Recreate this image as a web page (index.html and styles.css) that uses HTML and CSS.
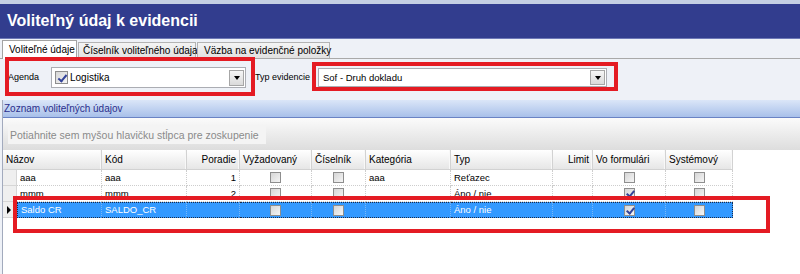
FILE: index.html
```html
<!DOCTYPE html>
<html lang="sk">
<head>
  <meta charset="UTF-8" />
  <title>Voliteľný údaj k evidencii</title>
  <link rel="stylesheet" href="styles.css">
</head>
<body>
  <div class="topline"></div>
  <header class="titlebar">
    <h1>Voliteľný údaj k evidencii</h1>
  </header>

  <nav class="tabs">
    <div class="tab active">Voliteľné údaje</div>
    <div class="tab tab-second">Číselník voliteľného údaja</div>
    <div class="tab tab-third">Väzba na evidenčné položky</div>
  </nav>

  <div class="filters">
    <label class="field-label label-agenda">Agenda</label>
    <div class="combo combo-agenda">
      <span class="check on"></span>
      <span class="combo-text">Logistika</span>
      <span class="dropdown"></span>
    </div>
    <label class="field-label label-type">Typ evidencie</label>
    <div class="combo combo-type">
      <span class="combo-text">Sof - Druh dokladu</span>
      <span class="dropdown"></span>
    </div>
  </div>

  <section class="list">
    <div class="list-caption">Zoznam voliteľných údajov</div>
    <div class="group-panel">
      <span class="group-hint">Potiahnite sem myšou hlavičku stĺpca pre zoskupenie</span>
    </div>

    <div class="grid-row grid-head">
      <div class="hcell hcell-name">Názov</div>
      <div class="hcell">Kód</div>
      <div class="hcell num">Poradie</div>
      <div class="hcell">Vyžadovaný</div>
      <div class="hcell">Číselník</div>
      <div class="hcell">Kategória</div>
      <div class="hcell">Typ</div>
      <div class="hcell num">Limit</div>
      <div class="hcell">Vo formulári</div>
      <div class="hcell">Systémový</div>
    </div>

    <div class="grid-row">
      <div class="indicator"></div>
      <div class="cell">aaa</div>
      <div class="cell">aaa</div>
      <div class="cell num">1</div>
      <div class="cell mid"><span class="check"></span></div>
      <div class="cell mid"><span class="check"></span></div>
      <div class="cell">aaa</div>
      <div class="cell">Reťazec</div>
      <div class="cell num"></div>
      <div class="cell mid"><span class="check"></span></div>
      <div class="cell mid"><span class="check"></span></div>
    </div>

    <div class="grid-row">
      <div class="indicator"></div>
      <div class="cell">mmm</div>
      <div class="cell">mmm</div>
      <div class="cell num">2</div>
      <div class="cell mid"><span class="check"></span></div>
      <div class="cell mid"><span class="check"></span></div>
      <div class="cell"></div>
      <div class="cell">Áno / nie</div>
      <div class="cell num"></div>
      <div class="cell mid"><span class="check on"></span></div>
      <div class="cell mid"><span class="check"></span></div>
    </div>

    <div class="grid-row selected">
      <div class="indicator current"></div>
      <div class="cell first">Saldo CR</div>
      <div class="cell">SALDO_CR</div>
      <div class="cell num"></div>
      <div class="cell mid"><span class="check"></span></div>
      <div class="cell mid"><span class="check"></span></div>
      <div class="cell"></div>
      <div class="cell">Áno / nie</div>
      <div class="cell num"></div>
      <div class="cell mid"><span class="check on"></span></div>
      <div class="cell mid last"><span class="check"></span></div>
    </div>
  </section>

  <!-- red highlight marks drawn over the screen -->
  <div class="mark mark-agenda"></div>
  <div class="mark mark-type"></div>
  <div class="mark mark-row"></div>
</body>
</html>
```

FILE: styles.css
```css
* {
  box-sizing: border-box;
}
body {
  margin: 0;
  width: 800px;
  height: 274px;
  overflow: hidden;
  position: relative;
  display: flex;
  flex-direction: column;
  font-family: "Liberation Sans", Arial, sans-serif;
  background: #eef1f7;
  color: #000;
}
.topline {
  height: 4px;
  background: #c5cfe3;
}
.titlebar {
  height: 35px;
  padding-left: 7px;
  display: flex;
  align-items: center;
  background: #323d8e;
  border-bottom: 1px solid #6d78b6;
}
.titlebar h1 {
  margin: 0;
  font-size: 16px;
  font-weight: bold;
  color: #fff;
}

/* tabs */
.tabs {
  height: 20px;
  display: flex;
  align-items: flex-end;
  padding-left: 2px;
  border-bottom: 1px solid #a9a9a9;
}
.tab {
  height: 16px;
  font-size: 10px;
  line-height: 15px;
  padding: 0 4px;
  margin-right: 1px;
  background: linear-gradient(#f4f4f4, #e1e1e1);
  border: 1px solid #b3b3b3;
  border-bottom: none;
  white-space: nowrap;
}
.tab.active {
  width: 75px;
  height: 19px;
  margin-bottom: -1px;
  padding-left: 6px;
  line-height: 17px;
  background: #fff;
  border-color: #a3a3a3;
}
.tab-second { width: 118px; }
.tab-third { width: 133px; padding-left: 6px; }

/* filter row */
.filters {
  height: 41px;
  display: flex;
  align-items: flex-start;
  padding: 8px 0 0 8px;
}
.field-label {
  font-size: 9px;
  line-height: 21px;
}
.label-agenda { width: 43px; }
.label-type { width: 63px; margin-left: 9px; }
.combo {
  display: flex;
  align-items: center;
  background: #fff;
  border: 1px solid #abadb3;
}
.combo-agenda {
  width: 195px;
  height: 21px;
  padding-left: 3px;
}
.combo-agenda .combo-text {
  font-size: 10px;
  margin-left: 2px;
}
.combo-agenda .check {
  width: 13px;
  height: 13px;
}
.combo-type {
  width: 289px;
  height: 19px;
  margin-top: 1px;
  padding-left: 4px;
}
.combo-type .combo-text {
  font-size: 9.5px;
}
.dropdown {
  position: relative;
  margin-left: auto;
  margin-right: 1px;
  width: 15px;
  height: 16px;
  border: 1px solid #a6a6a6;
  background: linear-gradient(#f6f6f6, #dadada);
  display: flex;
  align-items: center;
  justify-content: center;
}
.combo-type .dropdown { height: 15px; }
.dropdown::after {
  content: "";
  border-left: 3px solid transparent;
  border-right: 3px solid transparent;
  border-top: 4px solid #000;
  margin-top: 1px;
}

/* checkbox */
.check {
  position: relative;
  display: inline-block;
  width: 11px;
  height: 11px;
  border: 1px solid #8e8e8e;
  background: linear-gradient(135deg, #d6d6d6, #f5f5f5);
}
.check.on::after {
  content: "";
  position: absolute;
  left: 3px;
  top: 0;
  width: 3px;
  height: 6px;
  border-right: 2px solid #34449a;
  border-bottom: 2px solid #34449a;
  transform: rotate(40deg);
}
.combo-agenda .check.on::after {
  left: 4px;
  top: 1px;
  width: 3px;
  height: 7px;
}

/* list */
.list {
  flex: 1;
  margin-left: 2px;
  border-left: 1px solid #a2aabd;
  background: #fff;
  display: flex;
  flex-direction: column;
}
.list-caption {
  height: 18px;
  padding-left: 1px;
  font-size: 10px;
  line-height: 17px;
  color: #2b2f8c;
  background: linear-gradient(#dbe6f8, #a8c0ea);
  border-bottom: 1px solid #6a83c4;
}
.group-panel {
  height: 32px;
  padding: 7px 0 0 5px;
  background: linear-gradient(#fbfbfb, #dddddd);
}
.group-hint {
  display: inline-block;
  width: 258px;
  height: 18px;
  padding-left: 2px;
  font-size: 10.5px;
  line-height: 18px;
  color: #8a8a8a;
  background: #f4f4f4;
}

/* grid */
.grid-row {
  display: grid;
  grid-template-columns: 14px 85px 85px 53px 72px 54px 85px 102px 40px 73px 67px;
  height: 16px;
}
.grid-head {
  height: 20px;
}
.hcell {
  font-size: 10px;
  line-height: 19px;
  padding: 0 3px;
  white-space: nowrap;
  overflow: hidden;
  background: linear-gradient(#ffffff, #e6e6e6);
  border-right: 1px solid #d2d2d2;
  border-bottom: 1px solid #d2d2d2;
  box-shadow: inset -1px 0 0 #f8f8f8;
}
.hcell-name {
  grid-column: span 2;
}
.num {
  text-align: right;
}
.cell {
  font-size: 9.5px;
  line-height: 15px;
  padding: 0 3px;
  white-space: nowrap;
  overflow: hidden;
  border-right: 1px dotted #cdcdcd;
  border-bottom: 1px dotted #cdcdcd;
}
.cell.mid {
  display: flex;
  justify-content: center;
  align-items: center;
}
.indicator {
  display: flex;
  align-items: center;
  padding-left: 4px;
  background: #efefef;
  border-right: 1px solid #d6d6d6;
  border-bottom: 1px solid #d6d6d6;
}
.indicator.current::after {
  content: "";
  border-top: 4px solid transparent;
  border-bottom: 4px solid transparent;
  border-left: 4px solid #000;
}
.selected .cell {
  background: #3399ff;
  color: #fff;
  border-top: 1px dotted #1c2c4a;
  border-bottom: 1px dotted #1c2c4a;
  border-right-color: #79b8f8;
  line-height: 13px;
}
.selected .cell.first { border-left: 1px dotted #1c2c4a; }
.selected .cell.last { border-right: 1px dotted #1c2c4a; }

/* highlight rectangles */
.mark {
  position: absolute;
  border: 4px solid #e41b23;
}
.mark-agenda { left: 5px; top: 57px; width: 250px; height: 39px; }
.mark-type { left: 312px; top: 62px; width: 306px; height: 29px; }
.mark-row { left: 13px; top: 196px; width: 757px; height: 37px; }
```
